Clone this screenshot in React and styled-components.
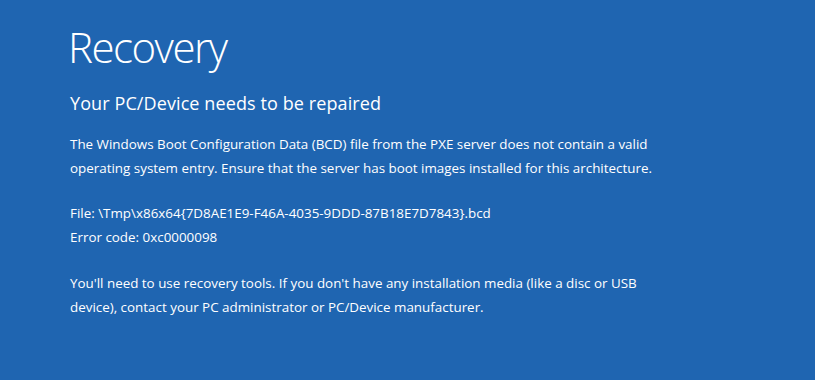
import React from "react";
import styled, { createGlobalStyle } from "styled-components";

const Global = createGlobalStyle`
  html, body { margin: 0; padding: 0; background: #1f65b1; }
  body { font-family: "Open Sans", "Noto Sans", sans-serif; color: #ffffff; }
`;

const Screen = styled.div`
  width: 815px;
  height: 380px;
  background: #1f65b1;
  box-sizing: border-box;
  padding: 22px 0 0 68px;
  display: flex;
  flex-direction: column;
  overflow: hidden;
`;

const Title = styled.h1`
  margin: 0;
  font-weight: 300;
  font-size: 42px;
  line-height: 50px;
  letter-spacing: -1.5px;
`;

const Subtitle = styled.h2`
  margin: 19px 0 0 2px;
  font-weight: 400;
  font-size: 18px;
  line-height: 24px;
  letter-spacing: 0.1px;
`;

const Para = styled.p`
  margin: ${(p) => p.$top}px 0 0 2px;
  font-size: 13.4px;
  line-height: 23.5px;
  font-weight: 400;
  letter-spacing: 0;
`;

export default function App() {
  return (
    <>
      <Global />
      <Screen>
        <Title>Recovery</Title>
        <Subtitle>Your PC/Device needs to be repaired</Subtitle>
        <Para $top={18}>
          The Windows Boot Configuration Data (BCD) file from the PXE server does not contain a valid
          <br />
          operating system entry. Ensure that the server has boot images installed for this architecture.
        </Para>
        <Para $top={22}>
          File: \Tmp\x86x64{"{"}7D8AE1E9-F46A-4035-9DDD-87B18E7D7843{"}"}.bcd
          <br />
          Error code: 0xc0000098
        </Para>
        <Para $top={23}>
          You'll need to use recovery tools. If you don't have any installation media (like a disc or USB
          <br />
          device), contact your PC administrator or PC/Device manufacturer.
        </Para>
      </Screen>
    </>
  );
}
